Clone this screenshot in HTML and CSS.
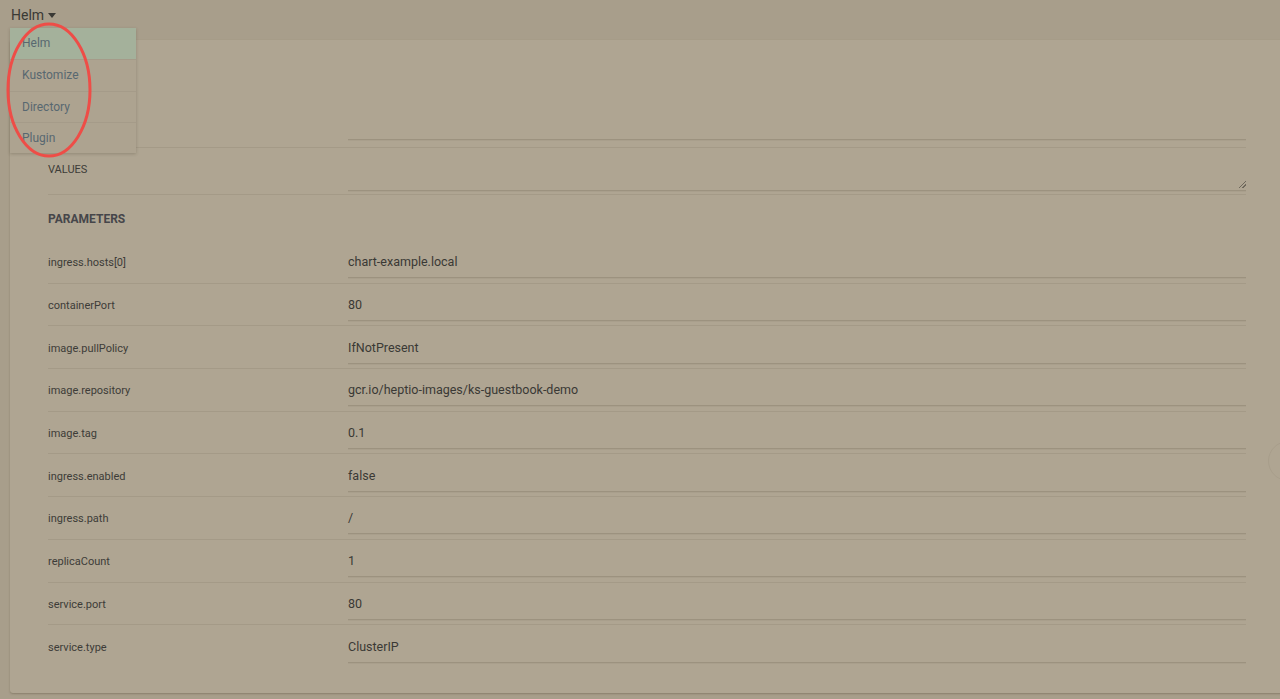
FILE: index.html
```html
<!DOCTYPE html>
<html>
<head>
<meta charset="utf-8">
<link rel="stylesheet" href="styles.css">
</head>
<body>
<div class="topbar">
  <button class="source-toggle">Helm <span class="caret"></span></button>
</div>
<ul class="menu">
  <li class="menu-item active">Helm</li>
  <li class="menu-item">Kustomize</li>
  <li class="menu-item">Directory</li>
  <li class="menu-item">Plugin</li>
</ul>
<svg class="ring" width="92" height="140" viewBox="0 0 92 140"><ellipse cx="47" cy="69" rx="41" ry="66" fill="none" stroke="#ee4d47" stroke-width="3"/></svg>
<main class="panel">
  <div class="row row-tall">
    <div class="label"></div>
    <div class="value"><div class="field"></div></div>
  </div>
  <div class="row row-values">
    <div class="label">VALUES</div>
    <div class="value"><div class="field area"><span class="grip"></span></div></div>
  </div>
  <div class="heading">PARAMETERS</div>
  <div class="row"><div class="label">ingress.hosts[0]</div><div class="value"><div class="field">chart-example.local</div></div></div>
  <div class="row"><div class="label">containerPort</div><div class="value"><div class="field">80</div></div></div>
  <div class="row"><div class="label">image.pullPolicy</div><div class="value"><div class="field">IfNotPresent</div></div></div>
  <div class="row"><div class="label">image.repository</div><div class="value"><div class="field">gcr.io/heptio-images/ks-guestbook-demo</div></div></div>
  <div class="row"><div class="label">image.tag</div><div class="value"><div class="field">0.1</div></div></div>
  <div class="row"><div class="label">ingress.enabled</div><div class="value"><div class="field">false</div></div></div>
  <div class="row"><div class="label">ingress.path</div><div class="value"><div class="field">/</div></div></div>
  <div class="row"><div class="label">replicaCount</div><div class="value"><div class="field">1</div></div></div>
  <div class="row"><div class="label">service.port</div><div class="value"><div class="field">80</div></div></div>
  <div class="row last"><div class="label">service.type</div><div class="value"><div class="field">ClusterIP</div></div></div>
</main>
<div class="fab"></div>
</body>
</html>
```

FILE: styles.css
```css
* { box-sizing: border-box; }
html, body { margin: 0; padding: 0; }
body {
  background: #a89e8b;
  font-family: Roboto, "Liberation Sans", sans-serif;
  color: #3a3935;
  width: 1280px;
  height: 699px;
  overflow: hidden;
  position: relative;
}
.topbar {
  height: 40px;
  padding: 6px 0 0 11px;
}
.source-toggle {
  background: none;
  border: 0;
  padding: 0;
  font-family: inherit;
  font-size: 14px;
  color: #3a3935;
  display: flex;
  align-items: center;
  gap: 4px;
  height: 18px;
}
.caret {
  width: 0; height: 0;
  border-left: 4.5px solid transparent;
  border-right: 4.5px solid transparent;
  border-top: 5px solid #3a3935;
  margin-top: 1px;
}
.menu {
  position: absolute;
  left: 10px;
  top: 28px;
  width: 126px;
  margin: 0;
  padding: 0;
  list-style: none;
  background: #ada390;
  box-shadow: 0 1px 3px rgba(60, 50, 30, 0.25);
  z-index: 5;
}
.menu-item {
  height: 31.3px;
  line-height: 30px;
  padding-left: 12px;
  font-size: 12px;
  color: #586870;
  border-top: 1px solid #a59b89;
}
.menu-item:first-child { border-top: 0; }
.menu-item.active { background: #a4b19b; }
.ring {
  position: absolute;
  left: 2px;
  top: 21px;
  z-index: 6;
}
.panel {
  margin-left: 10px;
  width: 1280px;
  height: 653px;
  background: #afa592;
  border-radius: 3px;
  box-shadow: 0 1px 2px rgba(80, 70, 50, 0.35);
  padding: 0 0 0 38px;
}
.row {
  width: 1198px;
  height: 42.7px;
  display: flex;
  align-items: center;
  border-bottom: 1px solid #a49a87;
  padding-top: 2px;
}
.row.last { border-bottom: 0; }
.row-tall {
  height: 108px;
  align-items: flex-end;
  padding-top: 0;
  padding-bottom: 7px;
}
.row-values {
  height: 47px;
  align-items: flex-start;
  padding-top: 15px;
}
.label {
  width: 300px;
  flex: none;
  font-size: 11px;
  color: #3d3c38;
}
.value { flex: 1; }
.field {
  height: 31px;
  font-size: 12.5px;
  line-height: 29px;
  color: #3a3935;
  border-bottom: 1px solid #9c927f;
  box-shadow: 0 1px 0 #a99f8c;
  position: relative;
}
.field.area {
  height: 41px;
  margin-top: -13px;
}
.grip {
  position: absolute;
  right: 0;
  bottom: 2px;
  width: 7px;
  height: 7px;
  background: linear-gradient(135deg, transparent 45%, #6e685c 45%, #6e685c 55%, transparent 55%, transparent 70%, #6e685c 70%, #6e685c 80%, transparent 80%);
}
.heading {
  height: 46px;
  line-height: 48px;
  font-size: 12px;
  font-weight: 700;
  color: #46464a;
  width: 1198px;
}
.fab {
  position: absolute;
  right: -28px;
  top: 441px;
  width: 40px;
  height: 40px;
  border-radius: 50%;
  border: 1px solid #a89e8b;
}
```
